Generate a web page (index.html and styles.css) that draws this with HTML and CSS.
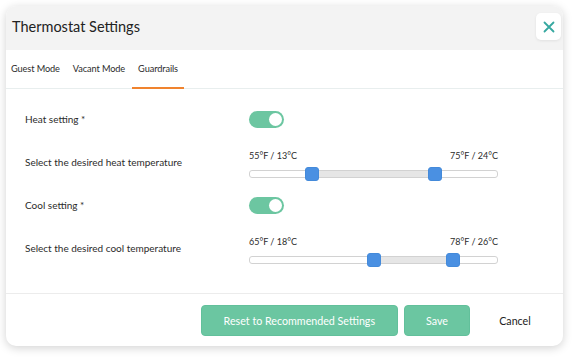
FILE: index.html
```html
<!DOCTYPE html>
<html lang="en">
<head>
  <meta charset="UTF-8">
  <title>Thermostat Settings</title>
  <link rel="stylesheet" href="styles.css">
</head>
<body>
  <div class="page">
    <div class="dialog">
      <div class="dialog-header">
        <h2>Thermostat Settings</h2>
        <button class="close-btn" aria-label="Close">
          <svg width="12" height="12" viewBox="0 0 12 12">
            <path d="M1.5 1.5 L10.5 10.5 M10.5 1.5 L1.5 10.5" stroke="#36a8a0" stroke-width="1.8" stroke-linecap="round"/>
          </svg>
        </button>
      </div>

      <div class="tabs">
        <div class="tab">Guest Mode</div>
        <div class="tab">Vacant Mode</div>
        <div class="tab active">Guardrails</div>
      </div>

      <div class="content">
        <div class="row toggle-row">
          <label class="row-label">Heat setting *</label>
          <div class="toggle on"><span class="knob"></span></div>
        </div>

        <div class="row slider-row">
          <label class="row-label">Select the desired heat temperature</label>
          <div class="slider">
            <div class="slider-values">
              <span>55°F / 13°C</span>
              <span>75°F / 24°C</span>
            </div>
            <div class="track">
              <div class="range" style="left: 25.3%; width: 49.8%;"></div>
              <div class="handle" style="left: 25.3%;"></div>
              <div class="handle" style="left: 75.1%;"></div>
            </div>
          </div>
        </div>

        <div class="row toggle-row">
          <label class="row-label">Cool setting *</label>
          <div class="toggle on"><span class="knob"></span></div>
        </div>

        <div class="row slider-row">
          <label class="row-label">Select the desired cool temperature</label>
          <div class="slider">
            <div class="slider-values">
              <span>65°F / 18°C</span>
              <span>78°F / 26°C</span>
            </div>
            <div class="track">
              <div class="range" style="left: 50.2%; width: 32.1%;"></div>
              <div class="handle" style="left: 50.2%;"></div>
              <div class="handle" style="left: 82.3%;"></div>
            </div>
          </div>
        </div>
      </div>

      <div class="dialog-footer">
        <button class="btn btn-primary">Reset to Recommended Settings</button>
        <button class="btn btn-primary btn-save">Save</button>
        <button class="btn btn-link">Cancel</button>
      </div>
    </div>
  </div>
</body>
</html>
```

FILE: styles.css
```css
body {
  margin: 0;
  font-family: 'Lato', 'Noto Sans', sans-serif;
  background: #ffffff;
  color: #2b2b2b;
}

.page {
  padding: 6px 14px 15px 6px;
}

.dialog {
  background: #ffffff;
  border-radius: 10px;
  box-shadow: 0 2px 10px rgba(0, 0, 0, 0.18);
  overflow: hidden;
}

.dialog-header {
  height: 44px;
  background: #f3f3f3;
  display: flex;
  align-items: center;
  justify-content: space-between;
  padding: 0 2px 3px 6px;
  box-sizing: border-box;
}

.dialog-header h2 {
  margin: 0;
  font-size: 14.5px;
  font-weight: 400;
  color: #222222;
}

.close-btn {
  width: 25px;
  height: 27px;
  border: none;
  border-radius: 5px;
  background: #ffffff;
  box-shadow: 0 1px 3px rgba(0, 0, 0, 0.08);
  display: flex;
  align-items: center;
  justify-content: center;
  padding: 0;
}

.tabs {
  display: flex;
  height: 38px;
  margin-left: -1.5px;
  border-bottom: 1px solid #e8eeee;
}

.tab {
  padding: 0 6.5px;
  font-size: 9.2px;
  letter-spacing: -0.1px;
  line-height: 38px;
  color: #2b2b2b;
  box-sizing: border-box;
}

.tab.active {
  border-bottom: 2px solid #f0832e;
  margin-bottom: -1px;
}

.content {
  padding: 13px 0 19px 19px;
}

.row {
  display: flex;
}

.row-label {
  width: 224px;
  font-size: 10px;
  color: #2b2b2b;
}

.toggle-row {
  height: 34px;
  align-items: center;
}

.slider-row {
  height: 52px;
  align-items: flex-start;
  padding-top: 14px;
  box-sizing: border-box;
}

.slider-row .row-label {
  padding-top: 6px;
  line-height: 12px;
}

.toggle {
  width: 35px;
  height: 17px;
  border-radius: 9px;
  background: #6cc6a1;
  position: relative;
}

.knob {
  position: absolute;
  top: 2px;
  right: 2px;
  width: 13px;
  height: 13px;
  border-radius: 50%;
  background: #ffffff;
}

.slider {
  width: 249px;
}

.slider-values {
  display: flex;
  justify-content: space-between;
  font-size: 9px;
  line-height: 12px;
  color: #2b2b2b;
}

.track {
  position: relative;
  height: 8px;
  margin-top: 8px;
  border: 1px solid #d2d2d2;
  border-radius: 3px;
  box-sizing: border-box;
  background: #ffffff;
}

.range {
  position: absolute;
  top: 0;
  bottom: 0;
  background: #e6e6e6;
}

.handle {
  position: absolute;
  top: -4px;
  width: 14px;
  height: 14px;
  margin-left: -7px;
  border-radius: 3px;
  background: #4a90e2;
  box-sizing: border-box;
  border: 1px solid #448ada;
}

.dialog-footer {
  border-top: 1px solid #ececec;
  display: flex;
  justify-content: flex-end;
  gap: 6px;
  padding: 11px 9px 10px;
}

.btn {
  height: 31px;
  font-family: inherit;
  font-size: 10.7px;
  border-radius: 4px;
  cursor: pointer;
}

.btn-primary {
  background: #6bc6a1;
  border: 1px solid #62c09b;
  color: #ffffff;
  padding: 0 22px;
}

.btn-save {
  padding: 0 21px;
}

.btn-link {
  background: none;
  border: none;
  color: #222222;
  width: 78px;
}
```
